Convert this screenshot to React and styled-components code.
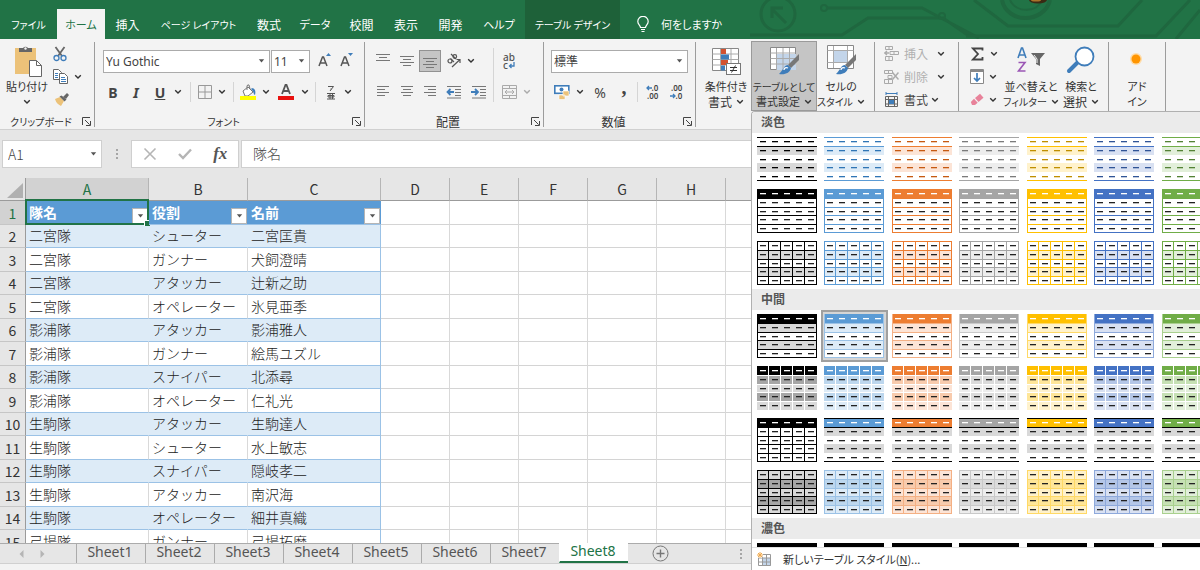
import React from "react";
import styled, { createGlobalStyle, css } from "styled-components";

const UI_FONT = `"Noto Sans CJK JP", "Noto Sans", sans-serif`;
const GREEN = "#217346";

const GlobalStyle = createGlobalStyle`
  * {
    box-sizing: border-box;
  }
  body {
    margin: 0;
    overflow: hidden;
    background: #e6e6e6;
    color: #333;
    font-family: ${UI_FONT};
    font-size: 12px;
  }
  button, input, select {
    margin: 0;
    padding: 0;
    border: 0;
    background: none;
    color: inherit;
    font: inherit;
    font-feature-settings: inherit;
  }
  svg {
    display: block;
    flex: none;
  }
`;

const Window = styled.div`
  position: relative;
  display: flex;
  flex-direction: column;
  height: 100vh;
`;

/* ---------- title bar and ribbon tabs ---------- */

const TabBar = styled.header`
  position: relative;
  display: flex;
  align-items: flex-end;
  height: 39px;
  background: ${GREEN};
  overflow: hidden;
`;

const Tabs = styled.nav`
  display: flex;
  align-items: flex-end;
  height: 100%;
`;

const Tab = styled.button`
  width: ${(p) => p.$width}px;
  height: ${(p) => (p.$context ? 39 : 30)}px;
  padding-top: ${(p) => (p.$context ? 9 : 0)}px;
  background: ${(p) => (p.$active ? "#f3f3f3" : p.$context ? "#1e6139" : "none")};
  color: ${(p) => (p.$active ? GREEN : "#fff")};
  font-size: ${(p) => (p.$tight ? 10 : p.$kana ? 11 : 12)}px;
  font-feature-settings: "palt";
  white-space: nowrap;
`;

const TellMe = styled.button`
  display: flex;
  align-items: center;
  gap: 12px;
  height: 30px;
  padding-left: 17px;
  color: #fff;
  font-size: 11px;
  font-feature-settings: "palt";
`;

const Circuit = styled.svg`
  position: absolute;
  top: 0;
  right: 0;
`;

/* ---------- ribbon ---------- */

const Ribbon = styled.section`
  display: flex;
  flex: none;
  height: 91px;
  padding: 3px 0 0;
  background: #f3f3f3;
  border-bottom: 1px solid #d0d0d0;
  font-feature-settings: "palt";
`;

const Group = styled.div`
  display: flex;
  flex-direction: column;
  flex: none;
  width: ${(p) => p.$width}px;
  height: 85px;
  border-right: 1px solid #9c9c9c;
`;

const GroupBody = styled.div`
  display: flex;
  flex: none;
  height: 70px;
  padding-left: ${(p) => p.$pad || 0}px;
`;

const GroupFooter = styled.div`
  display: flex;
  align-items: center;
  flex: none;
  height: 18px;
  padding-right: 3px;
`;

const GroupName = styled.span`
  flex: 1;
  font-size: ${(p) => (p.$tight ? 10 : p.$kana ? 11 : 12)}px;
  text-align: center;
`;

const Rows = styled.div`
  display: flex;
  flex-direction: column;
  gap: 9px;
  padding-top: 8px;
`;

const SmallRows = styled.div`
  display: flex;
  flex-direction: column;
`;

const Row = styled.div`
  display: flex;
  align-items: center;
  height: ${(p) => p.$height || 22}px;
  gap: ${(p) => p.$gap || 0}px;
`;

const Tool = styled.button`
  display: flex;
  align-items: center;
  justify-content: center;
  gap: 5px;
  width: ${(p) => p.$width}px;
  height: 22px;
  color: ${(p) => (p.$disabled ? "#b0b0b0" : "#444")};
  white-space: nowrap;
  ${(p) =>
    p.$active &&
    css`
      background: #c5c5c5;
      border: 1px solid #929292;
    `}
`;

const Letter = styled.span`
  font-family: "Noto Sans", sans-serif;
  font-size: 14px;
  font-weight: ${(p) => (p.$bold ? 700 : 400)};
  font-style: ${(p) => (p.$italic ? "italic" : "normal")};
  text-decoration: ${(p) => (p.$underline ? "underline" : "none")};
`;

const Comma = styled.span`
  padding-bottom: 10px;
  font-family: "Liberation Serif", serif;
  font-size: 20px;
  font-weight: 700;
  line-height: 20px;
`;

const Divider = styled.div`
  width: 1px;
  height: ${(p) => p.$height || 20}px;
  margin: ${(p) => p.$top || 0}px ${(p) => p.$side || 0}px 0;
  background: #d5d5d5;
`;

const BigTool = styled.button`
  display: flex;
  flex-direction: column;
  align-items: center;
  width: ${(p) => p.$width}px;
  height: 68px;
  padding-top: 3px;
  outline: ${(p) => (p.$active ? "1px solid #9a9a9a" : "none")};
  background: ${(p) => (p.$active ? "#c5c5c5" : "none")};
  font-size: 11px;
  line-height: 15px;
  white-space: nowrap;

  > svg:first-child {
    height: 34px;
  }
`;

const Line = styled.span`
  display: flex;
  align-items: center;
  gap: 4px;
  height: 15px;
  font-size: ${(p) => (p.$tight ? 10 : p.$kanji ? 12 : 11)}px;
`;

const SelectBox = styled.label`
  position: relative;
  display: flex;
  align-items: center;
  width: ${(p) => p.$width}px;
  height: 23px;
  background: #fff;
  border: 1px solid #ababab;

  select {
    width: 100%;
    height: 100%;
    padding-left: 2px;
    appearance: none;
    color: #444;
    font-family: "Noto Sans", "Noto Sans CJK JP", sans-serif;
    font-size: 12px;
    outline: none;
  }
  svg {
    position: absolute;
    right: 4px;
    pointer-events: none;
  }
`;

/* ---------- formula bar ---------- */

const FormulaBar = styled.section`
  display: flex;
  align-items: center;
  flex: none;
  height: 48px;
  padding-left: 2px;
`;

const NameBox = styled.label`
  position: relative;
  display: flex;
  align-items: center;
  width: 100px;
  height: 28px;
  background: #fff;
  border: 1px solid #cfcfcf;

  input {
    width: 80px;
    padding-left: 5px;
    color: #444;
    font-size: 14px;
    font-weight: 300;
    outline: none;
  }
  svg {
    position: absolute;
    right: 4px;
  }
`;

const FormulaTools = styled.div`
  display: flex;
  align-items: center;
  justify-content: space-around;
  width: 108px;
  height: 28px;
  margin-right: 2px;
  background: #fff;
  border: 1px solid #cfcfcf;
`;

const Fx = styled.span`
  color: #555;
  font-family: "Liberation Serif", serif;
  font-size: 17px;
  font-style: italic;
  font-weight: 700;
  line-height: 20px;
`;

const FormulaInput = styled.input`
  flex: 1;
  height: 28px;
  padding: 0 0 2px 11px;
  background: #fff;
  border: 1px solid #cfcfcf;
  color: #444;
  font-size: 14px;
  font-weight: 300;
`;

const Dots = styled.span`
  display: flex;
  flex-direction: column;
  align-items: center;
  gap: 2px;
  width: 29px;

  i {
    width: 2px;
    height: 2px;
    background: #a6a6a6;
  }
`;

/* ---------- sheet ---------- */

const SheetArea = styled.main`
  flex: 1;
  min-height: 0;
  background: #fff;
  overflow: hidden;
`;

const Sheet = styled.table`
  width: max-content;
  table-layout: fixed;
  border-collapse: separate;
  border-spacing: 0;
  color: #222;
  font-size: 14px;
  font-weight: 300;
  line-height: 20px;

  th, td {
    padding: 0;
    font-weight: 300;
    white-space: nowrap;
  }
  tbody td {
    padding-bottom: 2px;
  }
  tbody th, thead th {
    font-weight: 400;
  }
  tbody tr {
    height: 24px;
  }
  tbody tr:nth-child(even) {
    height: 23px;
  }
`;

const Corner = styled.th`
  background: #e6e6e6;
  border-right: 1px solid #9b9b9b;
  border-bottom: 1px solid #9b9b9b;

  svg {
    margin: 2px 0 0 6px;
  }
`;

const ColHead = styled.th`
  height: 23px;
  background: ${(p) => (p.$selected ? "#d2d2d2" : "#e6e6e6")};
  border-right: 1px solid #b5b5b5;
  border-bottom: 1px solid #9b9b9b;
  color: ${(p) => (p.$selected ? GREEN : "#333")};
`;

const RowHead = styled.th`
  background: ${(p) => (p.$selected ? "#d2d2d2" : "#e6e6e6")};
  border-right: 1px solid #9b9b9b;
  border-bottom: 1px solid #c6c6c6;
  color: ${(p) => (p.$selected ? GREEN : "#333")};
  text-align: center;
`;

const Cell = styled.td`
  border-right: 1px solid #d9d9d9;
  border-bottom: 1px solid #d4d4d4;
`;

const DataCell = styled.td`
  && {
    padding-left: 3px;
  }
  background: ${(p) => (p.$band ? "#ddebf7" : "#fff")};
  border-right: 1px solid ${(p) => (p.$last ? "#9bc2e6" : p.$band ? "#ddebf7" : "#d9d9d9")};
  border-bottom: 1px solid #9bc2e6;
`;

const HeadCell = styled.td`
  && {
    padding-bottom: 0;
  }
  position: relative;
  background: #5b9bd5;
  border-bottom: 1px solid #9bc2e6;
`;

const HeadContent = styled.div`
  display: flex;
  align-items: flex-end;
  justify-content: space-between;
  height: 23px;
  padding: 0 1px 0 3px;
  color: #fff;
  font-weight: 700;

  span {
    padding-bottom: 2px;
  }
`;

const FilterButton = styled.button`
  display: flex;
  align-items: center;
  justify-content: center;
  width: 16px;
  height: 16px;
  background: #fff;
  border: 1px solid #b5b5b5;
`;

const ActiveCell = styled.div`
  position: absolute;
  inset: -2px 0 -1px -1px;
  border: 2px solid ${GREEN};
  pointer-events: none;

  &::after {
    content: "";
    position: absolute;
    right: -3px;
    bottom: -3px;
    width: 5px;
    height: 5px;
    background: ${GREEN};
    border: solid #fff;
    border-width: 1px 0 0 1px;
  }
`;

const SheetBar = styled.nav`
  display: flex;
  flex: none;
  height: 20px;
  background: #e6e6e6;
  border-top: 1px solid #ababab;
`;

const SheetNav = styled.div`
  display: flex;
  align-items: center;
  gap: 16px;
  width: 76px;
  padding-left: 19px;
`;

const SheetTab = styled.button`
  width: 69px;
  height: ${(p) => (p.$active ? 20 : 19)}px;
  margin-top: ${(p) => (p.$active ? -1 : 0)}px;
  padding: 0 2px 4px 0;
  background: ${(p) => (p.$active ? "#fff" : "none")};
  border-left: 1px solid ${(p) => (p.$active ? "#fff" : "#ababab")};
  border-bottom: ${(p) => (p.$active ? `2px solid ${GREEN}` : "0")};
  color: ${(p) => (p.$active ? GREEN : "#555")};
  font-family: "Noto Sans", sans-serif;
  font-size: 14px;
  line-height: 15px;
`;

const AddSheet = styled.button`
  display: flex;
  align-items: center;
  margin-left: 24px;
`;

const BarGrip = styled.div`
  display: flex;
  align-items: center;
  margin-left: 57px;
`;

const StatusBar = styled.footer`
  flex: none;
  height: 7px;
  background: #f3f3f3;
  border-top: 1px solid #d0d0d0;
`;

/* ---------- table style gallery ---------- */

const Gallery = styled.div`
  position: absolute;
  top: 111px;
  right: 0;
  bottom: 0;
  left: 751px;
  display: flex;
  flex-direction: column;
  background: #fff;
  border: 1px solid #b0b0b0;
  border-width: 1px 0 0 1px;
  border-radius: 4px 0 0 0;
  overflow: hidden;
`;

const GalleryTitle = styled.h2`
  flex: none;
  height: 21px;
  margin: 0;
  padding-left: 9px;
  background: #ebebeb;
  color: #555;
  font-size: 12px;
  font-weight: 700;
  line-height: 20px;
`;

const Swatches = styled.div`
  display: grid;
  flex: none;
  grid-template-columns: repeat(4, 67px 68px);
  grid-auto-rows: 52px;
  padding-left: 2px;
`;

const Swatch = styled.button`
  width: 67px;
  height: 52px;
  padding: 4px 3px;
  ${(p) =>
    p.$selected &&
    css`
      background: #d5d5d5;
      box-shadow: inset 0 0 0 2px #a0a0a0;
    `}
`;

const DarkStrip = styled.div`
  display: grid;
  flex: none;
  grid-template-columns: repeat(4, 67px 68px);
  height: 8px;
  padding: 4px 0 0 5px;
`;

const DarkSwatch = styled.button`
  width: 60px;
  height: 4px;
  background: #000;
`;

const NewStyle = styled.button`
  display: flex;
  align-items: center;
  flex: 1;
  gap: 11px;
  padding-left: 5px;
  border-top: 1px solid #e1e1e1;
  font-size: 11px;
  font-feature-settings: "palt";
`;

/* ---------- data ---------- */

const TABS = [
  { label: "ファイル", width: 57, tight: true },
  { label: "ホーム", width: 48, kana: true, active: true },
  { label: "挿入", width: 45 },
  { label: "ページ レイアウト", width: 97, tight: true },
  { label: "数式", width: 44 },
  { label: "データ", width: 48, kana: true },
  { label: "校閲", width: 45 },
  { label: "表示", width: 44 },
  { label: "開発", width: 45 },
  { label: "ヘルプ", width: 52, kana: true },
  { label: "テーブル デザイン", width: 95, tight: true, context: true },
];

const COLUMNS = [
  ["A", 123], ["B", 99], ["C", 133], ["D", 69], ["E", 69], ["F", 69], ["G", 69],
  ["H", 69], ["I", 69], ["J", 69], ["K", 69], ["L", 69], ["M", 69], ["N", 69], ["O", 69],
];

const HEADINGS = ["隊名", "役割", "名前"];

const MEMBERS = [
  ["二宮隊", "シューター", "二宮匡貴"],
  ["二宮隊", "ガンナー", "犬飼澄晴"],
  ["二宮隊", "アタッカー", "辻新之助"],
  ["二宮隊", "オペレーター", "氷見亜季"],
  ["影浦隊", "アタッカー", "影浦雅人"],
  ["影浦隊", "ガンナー", "絵馬ユズル"],
  ["影浦隊", "スナイパー", "北添尋"],
  ["影浦隊", "オペレーター", "仁礼光"],
  ["生駒隊", "アタッカー", "生駒達人"],
  ["生駒隊", "シューター", "水上敏志"],
  ["生駒隊", "スナイパー", "隠岐孝二"],
  ["生駒隊", "アタッカー", "南沢海"],
  ["生駒隊", "オペレーター", "細井真織"],
  ["弓場隊", "ガンナー", "弓場拓磨"],
];

const SHEETS = ["Sheet1", "Sheet2", "Sheet3", "Sheet4", "Sheet5", "Sheet6", "Sheet7", "Sheet8"];

const PALETTE = [
  { main: "#000000", line: "#000000", mid: "#a6a6a6", tint: "#d9d9d9", text: "#000000" },
  { main: "#5b9bd5", line: "#9bc2e6", mid: "#bdd7ee", tint: "#ddebf7", text: "#2f75b5" },
  { main: "#ed7d31", line: "#f4b084", mid: "#f8cbad", tint: "#fce4d6", text: "#c65911" },
  { main: "#a5a5a5", line: "#c9c9c9", mid: "#dbdbdb", tint: "#ededed", text: "#7b7b7b" },
  { main: "#ffc000", line: "#ffd966", mid: "#ffe699", tint: "#fff2cc", text: "#bf8f00" },
  { main: "#4472c4", line: "#8ea9db", mid: "#b4c6e7", tint: "#d9e1f2", text: "#305496" },
  { main: "#70ad47", line: "#a9d08e", mid: "#c6e0b4", tint: "#e2efda", text: "#548235" },
];

/* ---------- drawings ---------- */

const Chevron = ({ color = "#333" }) => (
  <svg width="8" height="6" viewBox="0 0 8 6" fill="none" stroke={color} strokeWidth="1.4">
    <path d="M1.2 1.2 4 4l2.8-2.8" />
  </svg>
);

const Caret = () => (
  <svg width="7" height="4" viewBox="0 0 7 4">
    <path d="M.8.3h5.4L3.5 3.6z" fill="#555" />
  </svg>
);

const Launcher = () => (
  <svg width="9" height="9" viewBox="0 0 9 9" fill="none" stroke="#444">
    <path d="M.5 8V.5H8M3 3l4.6 4.6M8.5 4v4.5H4" />
  </svg>
);

const PasteIcon = () => (
  <svg width="30" height="34" viewBox="0 0 30 34">
    <rect x="3" y="3" width="21" height="26" fill="#ecc279" />
    <path d="M7 3h4a3 3 0 0 1 5 0h4v4H7z" fill="#666" />
    <circle cx="13.500" cy="3.500" r="1.200" fill="#f3f3f3" />
    <path d="M17.500 15.500h7l5 5v11h-12z" fill="#fff" stroke="#666" />
    <path d="M24.500 15.500v5h5" fill="none" stroke="#666" />
  </svg>
);

const ScissorsIcon = () => (
  <svg width="14" height="16" viewBox="0 0 14 16" fill="none">
    <path d="M2.500 1 9 10M11.500 1 5 10" stroke="#666" strokeWidth="1.800" />
    <circle cx="3.500" cy="12" r="2.500" stroke="#3f7dba" strokeWidth="1.300" />
    <circle cx="10.500" cy="12" r="2.500" stroke="#3f7dba" strokeWidth="1.300" />
  </svg>
);

const CopyIcon = () => (
  <svg width="15" height="15" viewBox="0 0 15 15" fill="#fff" stroke="#666">
    <path d="M.5.5h5l3 3v7h-8z" />
    <path d="M2 4.500h3M2 6.500h3M2 8.500h3" stroke="#3f7dba" />
    <path d="M6.500 4.500h5l3 3v7h-8z" />
    <path d="M8 8.500h4M8 10.500h5M8 12.500h5" stroke="#3f7dba" />
  </svg>
);

const BrushIcon = () => (
  <svg width="15" height="14" viewBox="0 0 15 14">
    <path d="m1 6 5-2 4 4-3 5c-2-1-5-3-6-7z" fill="#ecc279" />
    <path d="m5.500 3.500 2-1 5 4-2 2z" fill="#666" />
    <path d="m9 4 4-4 2 2-3 4z" fill="#666" />
  </svg>
);

const GrowIcon = ({ down }) => (
  <svg width="14" height="16" viewBox="0 0 14 16">
    <path d="M1 13 4.500 4h1L9 13M2.300 10h5.500" fill="none" stroke="#555" strokeWidth="1.500" />
    <path d={down ? "M8 0h5l-2.500 3z" : "M8 3h5l-2.500-3z"} fill="#3f7dba" />
  </svg>
);

const BordersIcon = () => (
  <svg width="14" height="14" viewBox="0 0 14 14" fill="none" stroke="#999">
    <path d="M.5.5h13v13H.5zM7 1v12M1 7h12" />
  </svg>
);

const FillIcon = () => (
  <svg width="16" height="17" viewBox="0 0 16 17">
    <path d="m3 7 5-4 5 5-5 4H5z" fill="#fff" stroke="#777" />
    <path d="M7 6V2a1.500 1.500 0 0 1 2-1l1 4" fill="none" stroke="#777" />
    <path d="M11.500 4c3.500 0 4.500 3 3.500 7-2-1-1-4-3.500-5z" fill="#3f7dba" />
    <rect y="12" width="16" height="4" fill="#ffff00" />
  </svg>
);

const FontColorIcon = () => (
  <svg width="16" height="17" viewBox="0 0 16 17">
    <path d="M4 10 7.500 1h1L12 10M5 7h6" fill="none" stroke="#555" strokeWidth="1.800" />
    <rect y="12" width="16" height="4" fill="#e8110f" />
  </svg>
);

const RubyIcon = () => (
  <svg width="10" height="15" viewBox="0 0 10 15" fill="none" stroke="#555">
    <path d="M2 1.500h5.500L4 6M5 3.500v1M1 8.500h8M1 14h8M4 8.500V14M6.500 8.500V14M2 10.500h6v1.500H2z" />
  </svg>
);

// Each entry in `lines` is a [start, end] pair, drawn 3px apart.
const LinesIcon = ({ lines, top = 2 }) => (
  <svg width="16" height="16" viewBox="0 0 16 16" stroke="#777">
    {lines.map(([from, to], i) => (
      <path key={i} d={`M${from} ${top + i * 3 + 0.5}H${to}`} />
    ))}
  </svg>
);

const OrientationIcon = () => (
  <svg width="16" height="16" viewBox="0 0 16 16" fill="none" stroke="#555" strokeWidth="1.200">
    <circle cx="4" cy="8" r="2" />
    <path d="m4.500 5.500 3.500 3.500M5 1l5 5" />
    <circle cx="8.800" cy="3.500" r="1.800" />
    <path d="m6 14 8-7.500M10.500 6.500H14v3.500" />
  </svg>
);

const IndentIcon = ({ left }) => (
  <svg width="16" height="14" viewBox="0 0 16 14">
    <path d="M1 1.500h14M9 4.500h6M9 7.500h6M9 10.500h6M1 13h14" stroke="#777" />
    <path
      d={left ? "M8 7H2.500M4.500 4 1.500 7l3 3" : "M0 7h6M4 4l3 3-3 3"}
      fill="none"
      stroke="#3f7dba"
      strokeWidth="1.800"
    />
  </svg>
);

const MergeIcon = () => (
  <svg width="15" height="14" viewBox="0 0 15 14" fill="none" stroke="#aaa">
    <path d="M.5.5h14v13H.5zM.5 3.500h14M.5 10.500h14M7.500.5v3M7.500 10.500v3M3 7h9M5 5 3 7l2 2M10 5l2 2-2 2" />
  </svg>
);

const WrapText = styled.span`
  display: flex;
  flex-direction: column;
  color: #555;
  font-family: "Noto Sans", sans-serif;
  font-size: 10px;
  font-weight: 500;
  line-height: 8px;
  text-align: left;
`;

const WrapLine = styled.span`
  display: flex;
  align-items: center;
`;

const WrapArrow = () => (
  <svg width="7" height="7" viewBox="0 0 7 7" fill="none" stroke="#3f7dba" strokeWidth="1.300">
    <path d="M6 0v4H1.500M3.500 2l-2 2 2 2" />
  </svg>
);

const MoneyIcon = () => (
  <svg width="16" height="15" viewBox="0 0 16 15">
    <rect x=".8" y=".8" width="14" height="7.500" fill="#fff" stroke="#3f7dba" strokeWidth="1.600" />
    <circle cx="7.500" cy="4.500" r="2" fill="#3f7dba" />
    <path d="M9 6h6v5H9zM5 10h6v4.500H5z" fill="#ecc279" stroke="#fff" strokeWidth=".6" />
  </svg>
);

const DecimalText = styled.span`
  display: flex;
  flex-direction: column;
  align-items: flex-end;
  color: #444;
  font-family: "Noto Sans", sans-serif;
  font-size: 8px;
  font-weight: 600;
  line-height: 8px;
`;

const TinyArrow = ({ left }) => (
  <svg width="6" height="6" viewBox="0 0 6 6" fill="none" stroke="#3f7dba" strokeWidth="1.300">
    <path d={left ? "M6 3H1M3 1 1 3l2 2" : "M0 3h5M3 1l2 2-2 2"} />
  </svg>
);

const ConditionalIcon = () => (
  <svg width="30" height="34" viewBox="0 0 30 34">
    <path d="M1.500 3.500h26v22h-26z" fill="#fff" stroke="#888" />
    <path d="M1.500 9h26M1.500 14.500h26M1.500 20h26M9.500 4v21M20 4v21" fill="none" stroke="#aaa" />
    <path d="M10 4h5v5h-5zM10 15h7v5h-7z" fill="#d35230" />
    <path d="M10 9.500h8v5h-8zM10 20.500h4v5h-4z" fill="#3f7dba" />
    <rect x="15.500" y="18.500" width="14" height="11" fill="#fff" stroke="#777" />
    <path d="M19 22.500h7M19 25.500h7M24.500 20.500l-4 7" stroke="#333" />
  </svg>
);

const Paintbrush = () => (
  <>
    <path d="M30 9v6l-8 8-3-3z" fill="#777" />
    <path d="M19 20c-4 0-4 4-9 9 6 1 11-1 12-6z" fill="#3f7dba" />
    <path d="M15 25c0-2 2-3 4-2" fill="none" stroke="#fff" strokeWidth="1.300" />
  </>
);

const FormatTableIcon = () => (
  <svg width="30" height="34" viewBox="0 0 30 34">
    <path d="M1.500 2.500h25v22h-25z" fill="#fff" stroke="#888" />
    <path d="M8 9h19v16H8z" fill="#c3d5ea" />
    <path d="M1.500 8h25M1.500 13.500h25M1.500 19h25M7.500 3v22M14 3v22M20.500 3v22" fill="none" stroke="#aaa" />
    <Paintbrush />
  </svg>
);

const CellStyleIcon = () => (
  <svg width="30" height="34" viewBox="0 0 30 34">
    <path d="M1.500.5h26v23h-26z" fill="#fff" stroke="#888" />
    <path d="M1.500 5.500h26M1.500 17.500h26M7.500 1v22M21.500 1v22" fill="none" stroke="#aaa" />
    <path d="M8 6h13v11H8z" fill="#c3d5ea" />
    <Paintbrush />
  </svg>
);

const InsertIcon = () => (
  <svg width="15" height="15" viewBox="0 0 15 15" fill="none" stroke="#aaa">
    <path d="M1.500.5h7v3h-7zM5 .5v3M6 5.500h8.500v3H6zM10 5.500v3M1.500 10.500h7v4h-7zM5 10.500v4" />
    <path d="M5 7H.8M3 5 .8 7 3 9" strokeWidth="1.300" />
  </svg>
);

const DeleteIcon = () => (
  <svg width="15" height="14" viewBox="0 0 15 14" fill="none" stroke="#aaa">
    <path d="M.5.5h8v3h-8zM4.500.5v3M4 5.500h4v3H4zM.5 9.500h8v4h-8zM4.500 9.500v4" />
    <path d="m8.500 2.500 6 7M14.500 2.500l-6 7" strokeWidth="1.500" />
  </svg>
);

const FormatIcon = () => (
  <svg width="15" height="16" viewBox="0 0 15 16" fill="none" stroke="#666">
    <path d="M2 1.500h11M2 0v3M13 0v3" stroke="#3f7dba" />
    <path d="M1.500 4.500h12v10h-12zM1.500 7.500h12M1.500 12h12M4.500 4.500v10M10.500 4.500v10" />
    <path d="M5 8h5v4H5z" fill="#3f7dba" stroke="none" />
  </svg>
);

const SigmaIcon = () => (
  <svg width="13" height="14" viewBox="0 0 13 14" fill="none" stroke="#444" strokeWidth="1.800">
    <path d="M11.500 3.500V1.500H2L7 7l-5 5.500h9.500v-2.500" />
  </svg>
);

const FillDownIcon = () => (
  <svg width="14" height="15" viewBox="0 0 14 15" fill="none">
    <path d="M.5.5h13v14H.5z" fill="#fff" stroke="#888" />
    <path d="M.5 2h13" stroke="#888" strokeWidth="2" />
    <path d="M7 4v8M4 9l3 3 3-3" stroke="#3f7dba" strokeWidth="1.700" />
  </svg>
);

const EraserIcon = () => (
  <svg width="14" height="13" viewBox="0 0 14 13">
    <path d="M5 5 10 .8l3.500 4-5 4.200z" fill="#e8829a" />
    <path d="m4 5.800 3.700 4L5 12H2L.8 9z" fill="#e8829a" />
  </svg>
);

const SortIcon = () => (
  <svg width="30" height="34" viewBox="0 0 30 34" fill="none">
    <path d="M2 13 5.500 3h1L10 13M3 10h6" stroke="#3f7dba" strokeWidth="1.600" />
    <path d="M2.500 17.500H9L2.500 26h7" stroke="#9b57b5" strokeWidth="1.600" />
    <path d="M15 8h14l-5 6v7l-4-2v-5z" fill="#666" />
    <path d="m18 10 3 4v4" stroke="#f3f3f3" />
  </svg>
);

const SearchIcon = () => (
  <svg width="30" height="34" viewBox="0 0 30 34">
    <path d="m12 17-9 9" stroke="#3f7dba" strokeWidth="4" strokeLinecap="round" />
    <circle cx="18.500" cy="11.500" r="9" fill="#fff" stroke="#3f7dba" strokeWidth="1.800" />
  </svg>
);

const AddinIcon = () => (
  <svg width="30" height="34" viewBox="0 0 30 34">
    <circle cx="14" cy="14" r="6" fill="#ffdca8" />
    <circle cx="14" cy="14" r="4.500" fill="#ff9500" />
  </svg>
);

const BulbIcon = () => (
  <svg width="12" height="17" viewBox="0 0 12 17" fill="none" stroke="#fff" strokeWidth="1.200">
    <path d="M3.500 11.500c0-2-2.700-3-2.700-6a5.200 5.200 0 0 1 10.400 0c0 3-2.700 4-2.700 6zM4 13.500h4M4.500 15.500h3" />
  </svg>
);

const NewStyleIcon = () => (
  <svg width="15" height="15" viewBox="0 0 15 15" fill="none">
    <path d="M5 6h9v8H5z" fill="#c3d5ea" />
    <path d="M1.500 2.500h12v11h-12zM1.500 6h12M1.500 10h12M5.500 2.500v11M9.500 2.500v11" stroke="#999" />
    <circle cx="3" cy="3" r="3" fill="#fff" />
    <path d="M3 0v6M0 3h6M1 1l4 4M5 1 1 5" stroke="#f0a84b" />
  </svg>
);

function CircuitArt() {
  return (
    <Circuit width="460" height="39" viewBox="0 0 460 39" fill="none" stroke="#1f673f" strokeWidth="2">
      <circle cx="38" cy="14" r="17" strokeWidth="3" />
      <path d="m46 23-14-14M32 18V8h11" strokeWidth="3" />
      <circle cx="84" cy="8" r="3" />
      <path d="M87 8h95l19 10 38 20M10 35h92l26-17h75l26 18" strokeWidth="3" />
      <circle cx="202" cy="16" r="3" />
      <path d="m234 0 34 26h110L402 0M226 36h190l34-36M436 39 460 10" strokeWidth="3" />
      <path d="M262 0c5 24 42 24 48 0" strokeWidth="4" />
      <path d="M270 0c6 13 27 13 32 0" />
      <ellipse cx="298" cy="0" rx="9" ry="3.500" fill="#3a2a14" stroke="none" />
      <ellipse cx="296" cy="0" rx="5" ry="1.500" fill="#a8732a" stroke="none" />
    </Circuit>
  );
}

const COL_EDGES = [0, 12, 24, 36, 48, 60];
const ROW_EDGES = [0, 9, 18, 26, 35, 44];

// Works out fills and rules of one preview from its style name and colour.
const thumbRules = (kind, c) => {
  const black = c.main === "#000000";
  const band = (odd, even) => [odd, even, odd, even];
  switch (kind) {
    case "lines":
      return { fills: ["#fff", ...band(c.tint, "#fff")], h: [0, 1, 5], hColor: c.main, dash: c.text, headDash: c.text };
    case "boxed":
      return { fills: [c.main, ...band("#fff", "#fff")], h: [0, 1, 2, 3, 4, 5], hColor: c.main, v: [0, 5], vColor: c.main };
    case "grid":
      return { fills: ["#fff", ...band(c.tint, "#fff")], h: [0, 1, 2, 3, 4, 5], hColor: c.main, v: [0, 1, 2, 3, 4, 5], vColor: c.main, headDash: "#222" };
    case "banded":
      return { fills: [c.main, ...band(c.tint, "#fff")], h: [1, 2, 3, 4, 5], hColor: c.line, v: [0, 5], vColor: c.line };
    case "tiles":
      return { fills: [c.main, ...band(c.mid, c.tint)], h: [1, 2, 3, 4], hColor: "#fff", v: [1, 2, 3, 4], vColor: "#fff" };
    case "ruled":
      return black
        ? { fills: [c.main, ...band("#fff", "#fff")], h: [1, 2, 3, 4, 5], hColor: "#000", v: [0, 1, 2, 3, 4, 5], vColor: "#000" }
        : { fills: [c.main, ...band("#d9d9d9", "#fff")], h: [0, 1, 5], hColor: "#000" };
    default:
      return { fills: [c.tint, ...band(c.mid, c.tint)], h: [0, 1, 2, 3, 4, 5], hColor: c.line, v: [0, 1, 2, 3, 4, 5], vColor: c.line, headDash: "#222" };
  }
};

function TableThumb({ kind, color }) {
  const { fills, h = [], v = [], hColor, vColor, dash = "#222", headDash = "#fff" } = thumbRules(kind, color);
  const edge = (n, max) => Math.min(Math.max(n, 0.5), max - 0.5);
  return (
    <svg width="60" height="44" viewBox="0 0 60 44">
      {fills.map((fill, r) => (
        <rect key={r} y={ROW_EDGES[r]} width="60" height={ROW_EDGES[r + 1] - ROW_EDGES[r]} fill={fill} />
      ))}
      {h.map((i) => (
        <path key={`h${i}`} d={`M0 ${edge(ROW_EDGES[i] + 0.5, 44)}H60`} stroke={hColor} />
      ))}
      {v.map((i) => (
        <path key={`v${i}`} d={`M${edge(COL_EDGES[i] - 0.5, 60)} 0V44`} stroke={vColor} />
      ))}
      {fills.map((_, r) =>
        COL_EDGES.slice(0, 5).map((x) => (
          <rect key={`${r}-${x}`} x={x + 3} y={ROW_EDGES[r] + 4} width="6" height="1.3" fill={r ? dash : headDash} />
        ))
      )}
    </svg>
  );
}

/* ---------- sections ---------- */

const DropTool = ({ width, label, disabled }) => (
  <Tool $width={width} aria-label={label}>
    <Chevron color={disabled ? "#aaa" : "#333"} />
  </Tool>
);

const Footer = ({ name, kana, tight }) => (
  <GroupFooter>
    <GroupName $kana={kana} $tight={tight}>{name}</GroupName>
    <button aria-label={`${name}の設定`}><Launcher /></button>
  </GroupFooter>
);

const Picker = ({ label, value, width }) => (
  <SelectBox $width={width}>
    <select aria-label={label} defaultValue={value}>
      <option>{value}</option>
    </select>
    <Caret />
  </SelectBox>
);

const BigButton = ({ icon, top, bottom, kanji, tight, tightBottom, ...rest }) => (
  <BigTool {...rest}>
    {icon}
    <Line $tight={tight}>{top}</Line>
    <Line $kanji={kanji} $tight={tightBottom}>{bottom}<Chevron /></Line>
  </BigTool>
);

function RibbonPanel() {
  return (
    <Ribbon>
      <Group $width={95}>
        <GroupBody $pad={4}>
          <BigTool $width={46}>
            <PasteIcon />
            <Line>貼り付け</Line>
            <Line><Chevron /></Line>
          </BigTool>
          <SmallRows>
            <Row $height={23}><Tool $width={20} aria-label="切り取り"><ScissorsIcon /></Tool></Row>
            <Row $height={23}>
              <Tool $width={20} aria-label="コピー"><CopyIcon /></Tool>
              <DropTool width={16} label="コピーのオプション" />
            </Row>
            <Row $height={23}><Tool $width={22} aria-label="書式のコピー"><BrushIcon /></Tool></Row>
          </SmallRows>
        </GroupBody>
        <Footer name="クリップボード" tight />
      </Group>

      <Group $width={270}>
        <GroupBody $pad={8}>
          <Rows>
            <Row $gap={1}>
              <Picker label="フォント" value="Yu Gothic" width={167} />
              <Picker label="フォント サイズ" value="11" width={39} />
              <Tool $width={28} aria-label="フォント サイズの拡大"><GrowIcon /></Tool>
              <Tool $width={14} aria-label="フォント サイズの縮小"><GrowIcon down /></Tool>
            </Row>
            <Row>
              <Tool $width={20}><Letter $bold>B</Letter></Tool>
              <Tool $width={26}><Letter $bold $italic>I</Letter></Tool>
              <Tool $width={22}><Letter $bold $underline>U</Letter></Tool>
              <DropTool width={14} label="下線" />
              <Divider $side={5} />
              <Tool $width={18} aria-label="罫線"><BordersIcon /></Tool>
              <DropTool width={16} label="罫線の種類" />
              <Divider $side={3} />
              <Tool $width={22} aria-label="塗りつぶしの色"><FillIcon /></Tool>
              <DropTool width={13} label="塗りつぶしの色の選択" />
              <Tool $width={28} aria-label="フォントの色"><FontColorIcon /></Tool>
              <DropTool width={10} label="フォントの色の選択" />
              <Divider $side={5} />
              <Tool $width={20} aria-label="ふりがなの表示"><RubyIcon /></Tool>
              <DropTool width={14} label="ふりがなのオプション" />
            </Row>
          </Rows>
        </GroupBody>
        <Footer name="フォント" tight />
      </Group>

      <Group $width={179}>
        <GroupBody $pad={6}>
          <Rows>
            <Row>
              <Tool $width={24} aria-label="上揃え"><LinesIcon top={1} lines={[[1, 15], [4, 12], [1, 15]]} /></Tool>
              <Tool $width={24} aria-label="上下中央揃え"><LinesIcon top={3} lines={[[1, 15], [4, 12], [1, 15], [4, 12]]} /></Tool>
              <Tool $width={22} $active aria-label="下揃え"><LinesIcon top={5} lines={[[1, 15], [4, 12], [1, 15], [4, 12]]} /></Tool>
              <Tool $width={26} aria-label="方向"><OrientationIcon /></Tool>
              <DropTool width={8} label="方向のオプション" />
            </Row>
            <Row>
              <Tool $width={24} aria-label="左揃え"><LinesIcon lines={[[2, 14], [2, 10], [2, 14], [2, 10]]} /></Tool>
              <Tool $width={24} aria-label="中央揃え"><LinesIcon lines={[[2, 14], [4, 12], [2, 14], [4, 12]]} /></Tool>
              <Tool $width={22} aria-label="右揃え"><LinesIcon lines={[[2, 14], [6, 14], [2, 14], [6, 14]]} /></Tool>
              <Tool $width={26} aria-label="インデントを減らす"><IndentIcon left /></Tool>
              <Tool $width={24} aria-label="インデントを増やす"><IndentIcon /></Tool>
            </Row>
          </Rows>
          <Divider $height={54} $top={6} $side={2} />
          <Rows>
            <Row>
              <Tool $width={26} aria-label="折り返して全体を表示する">
                <WrapText>ab<WrapLine>c<WrapArrow /></WrapLine></WrapText>
              </Tool>
            </Row>
            <Row>
              <Tool $width={26} aria-label="セルを結合して中央揃え"><MergeIcon /></Tool>
              <DropTool width={10} label="結合のオプション" disabled />
            </Row>
          </Rows>
        </GroupBody>
        <Footer name="配置" />
      </Group>

      <Group $width={152}>
        <GroupBody $pad={7}>
          <Rows>
            <Row><Picker label="表示形式" value="標準" width={137} /></Row>
            <Row>
              <Tool $width={22} aria-label="通貨表示形式"><MoneyIcon /></Tool>
              <DropTool width={14} label="通貨の種類" />
              <Tool $width={26}><Letter>%</Letter></Tool>
              <Tool $width={22} aria-label="桁区切りスタイル"><Comma>,</Comma></Tool>
              <Divider $side={2} />
              <Tool $width={24} aria-label="小数点以下の表示桁数を増やす">
                <DecimalText><WrapLine><TinyArrow left />.0</WrapLine><span>.00</span></DecimalText>
              </Tool>
              <Tool $width={24} aria-label="小数点以下の表示桁数を減らす">
                <DecimalText><span>.00</span><WrapLine><TinyArrow />.0</WrapLine></DecimalText>
              </Tool>
            </Row>
          </Rows>
        </GroupBody>
        <Footer name="数値" />
      </Group>

      <Group $width={179}>
        <GroupBody $pad={4}>
          <BigButton $width={52} icon={<ConditionalIcon />} top="条件付き" bottom="書式" kanji />
          <BigButton $width={64} $active icon={<FormatTableIcon />} top="テーブルとして" bottom="書式設定" tight />
          <BigButton $width={50} icon={<CellStyleIcon />} top="セルの" bottom="スタイル" tightBottom />
        </GroupBody>
      </Group>

      <Group $width={84}>
        <GroupBody $pad={9}>
          <SmallRows>
            <Row $height={23} $gap={6}><Tool $disabled><InsertIcon />挿入</Tool><DropTool width={14} label="挿入の種類" /></Row>
            <Row $height={23} $gap={6}><Tool $disabled><DeleteIcon />削除</Tool><DropTool width={14} label="削除の種類" /></Row>
            <Row $height={23}><Tool><FormatIcon />書式</Tool><DropTool width={14} label="書式の種類" /></Row>
          </SmallRows>
        </GroupBody>
      </Group>

      <Group $width={150}>
        <GroupBody $pad={8}>
          <SmallRows>
            <Row $height={23}><Tool $width={20} aria-label="オート SUM"><SigmaIcon /></Tool><DropTool width={14} label="集計方法" /></Row>
            <Row $height={23}><Tool $width={20} aria-label="フィル"><FillDownIcon /></Tool><DropTool width={12} label="フィルの方向" /></Row>
            <Row $height={23}><Tool $width={20} aria-label="クリア"><EraserIcon /></Tool><DropTool width={12} label="クリアの種類" /></Row>
          </SmallRows>
          <BigButton $width={60} icon={<SortIcon />} top="並べ替えと" bottom="フィルター" tightBottom />
          <BigButton $width={40} icon={<SearchIcon />} top="検索と" bottom="選択" kanji />
        </GroupBody>
      </Group>

      <Group $width={57}>
        <GroupBody>
          <BigTool $width={57}>
            <AddinIcon />
            <Line>アド</Line>
            <Line>イン</Line>
          </BigTool>
        </GroupBody>
      </Group>
    </Ribbon>
  );
}

function SheetTable() {
  return (
    <Sheet>
      <colgroup>
        <col width="26" />
        {COLUMNS.map(([name, width]) => <col key={name} width={width} />)}
      </colgroup>
      <thead>
        <tr>
          <Corner aria-label="すべて選択">
            <svg width="18" height="17" viewBox="0 0 18 17"><path d="M17 1v15H1z" fill="#b0b0b0" /></svg>
          </Corner>
          {COLUMNS.map(([name]) => <ColHead key={name} $selected={name === "A"}>{name}</ColHead>)}
        </tr>
      </thead>
      <tbody>
        <tr>
          <RowHead $selected>1</RowHead>
          {HEADINGS.map((text, i) => (
            <HeadCell key={text}>
              <HeadContent>
                <span>{text}</span>
                <FilterButton aria-label={`${text}のフィルター`}><Caret /></FilterButton>
              </HeadContent>
              {i === 0 && <ActiveCell />}
            </HeadCell>
          ))}
          {COLUMNS.slice(3).map(([name]) => <Cell key={name} />)}
        </tr>
        {MEMBERS.map((row, r) => (
          <tr key={r}>
            <RowHead>{r + 2}</RowHead>
            {row.map((text, i) => (
              <DataCell key={i} $band={r % 2 === 0} $last={i === 2}>{text}</DataCell>
            ))}
            {COLUMNS.slice(3).map(([name]) => <Cell key={name} />)}
          </tr>
        ))}
      </tbody>
    </Sheet>
  );
}

const SwatchRows = ({ kinds, selected }) => (
  <Swatches>
    {kinds.map((kind, k) => (
      <React.Fragment key={kind}>
        {PALETTE.map((color, i) => (
          <Swatch key={color.main} $selected={selected === i && k === 0} aria-label={`スタイル ${k * 7 + i + 1}`}>
            <TableThumb kind={kind} color={color} />
          </Swatch>
        ))}
        <span />
      </React.Fragment>
    ))}
  </Swatches>
);

function StyleGallery() {
  return (
    <Gallery>
      <GalleryTitle>淡色</GalleryTitle>
      <SwatchRows kinds={["lines", "boxed", "grid"]} />
      <GalleryTitle>中間</GalleryTitle>
      <SwatchRows kinds={["banded", "tiles", "ruled", "filled"]} selected={1} />
      <GalleryTitle>濃色</GalleryTitle>
      <DarkStrip>
        {PALETTE.map((color) => <DarkSwatch key={color.main} aria-label="濃色スタイル" />)}
      </DarkStrip>
      <NewStyle>
        <NewStyleIcon />
        <span>新しいテーブル スタイル(<u>N</u>)...</span>
      </NewStyle>
    </Gallery>
  );
}

export default function App() {
  return (
    <Window>
      <GlobalStyle />
      <TabBar>
        <CircuitArt />
        <Tabs>
          {TABS.map((t) => (
            <Tab key={t.label} $width={t.width} $kana={t.kana} $tight={t.tight} $active={t.active} $context={t.context}>
              {t.label}
            </Tab>
          ))}
        </Tabs>
        <TellMe><BulbIcon />何をしますか</TellMe>
      </TabBar>

      <RibbonPanel />

      <FormulaBar>
        <NameBox>
          <input aria-label="名前ボックス" defaultValue="A1" />
          <Caret />
        </NameBox>
        <Dots><i /><i /><i /></Dots>
        <FormulaTools>
          <button aria-label="キャンセル">
            <svg width="14" height="14" viewBox="0 0 14 14" stroke="#b5b5b5" strokeWidth="1.600"><path d="m1.500 1.500 11 11M12.500 1.500l-11 11" /></svg>
          </button>
          <button aria-label="入力">
            <svg width="14" height="12" viewBox="0 0 14 12" fill="none" stroke="#b5b5b5" strokeWidth="2.400"><path d="m1 6 4 4 8-8.500" /></svg>
          </button>
          <button aria-label="関数の挿入"><Fx>fx</Fx></button>
        </FormulaTools>
        <FormulaInput aria-label="数式バー" defaultValue="隊名" />
      </FormulaBar>

      <SheetArea><SheetTable /></SheetArea>

      <SheetBar>
        <SheetNav>
          <button aria-label="前のシート"><svg width="5" height="8" viewBox="0 0 5 8"><path d="M4.500 0v8L.5 4z" fill="#b5b5b5" /></svg></button>
          <button aria-label="次のシート"><svg width="5" height="8" viewBox="0 0 5 8"><path d="M.5 0v8l4-4z" fill="#b5b5b5" /></svg></button>
        </SheetNav>
        {SHEETS.map((name) => <SheetTab key={name} $active={name === "Sheet8"}>{name}</SheetTab>)}
        <AddSheet aria-label="新しいシート">
          <svg width="17" height="17" viewBox="0 0 17 17" fill="none" stroke="#777">
            <circle cx="8.500" cy="8.500" r="7.500" />
            <path d="M8.500 4.500v8M4.500 8.500h8" strokeWidth="1.400" />
          </svg>
        </AddSheet>
        <BarGrip><Dots><i /><i /><i /></Dots></BarGrip>
      </SheetBar>
      <StatusBar />

      <StyleGallery />
    </Window>
  );
}
